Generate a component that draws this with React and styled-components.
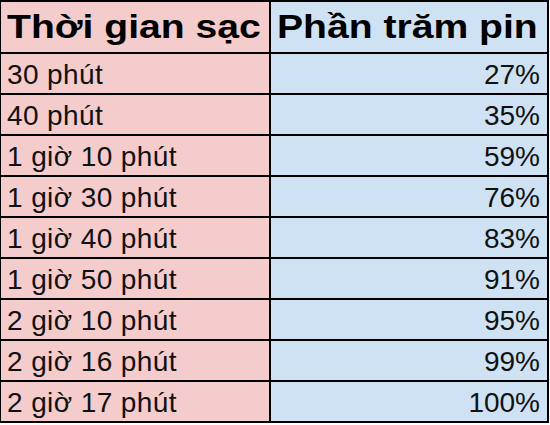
import styled, { createGlobalStyle } from "styled-components";

const GlobalStyle = createGlobalStyle`
  html, body {
    margin: 0;
    padding: 0;
    background: #fff;
  }
  body {
    font-family: "Liberation Sans", Arial, sans-serif;
    color: #000;
  }
`;

const Sheet = styled.div`
  display: grid;
  grid-template-columns: 270px 278px;
  grid-template-rows: 52px repeat(9, 41px);
  width: 548px;
  border-top: 2px solid #000;
  border-left: 1px solid #000;
`;

const Cell = styled.div`
  display: flex;
  align-items: ${(p) => (p.$head ? "flex-end" : "center")};
  justify-content: ${(p) => (p.$right ? "flex-end" : "flex-start")};
  background: ${(p) => (p.$blue ? "#cfe2f3" : "#f4cccc")};
  border-right: 2px solid #000;
  border-bottom: 2px solid #000;
  padding: ${(p) => (p.$head ? "0 4px 6px 6px" : "3px 7px 0 6px")};
  font-size: ${(p) => (p.$head ? "34px" : "28px")};
  font-weight: ${(p) => (p.$head ? 700 : 400)};
  color: ${(p) => (p.$head ? "#000" : "#111")};
  white-space: nowrap;
  overflow: hidden;
`;

const HeadText = styled.span`
  display: inline-block;
  transform: scaleX(1.15);
  transform-origin: left center;
`;

const BodyText = styled.span`
  letter-spacing: ${(p) => (p.$wide ? "0.4px" : "0")};
`;

const rows = [
  ["30 phút", "27%"],
  ["40 phút", "35%"],
  ["1 giờ 10 phút", "59%"],
  ["1 giờ 30 phút", "76%"],
  ["1 giờ 40 phút", "83%"],
  ["1 giờ 50 phút", "91%"],
  ["2 giờ 10 phút", "95%"],
  ["2 giờ 16 phút", "99%"],
  ["2 giờ 17 phút", "100%"],
];

export default function App() {
  return (
    <>
      <GlobalStyle />
      <Sheet>
        <Cell $head>
          <HeadText>Thời gian sạc</HeadText>
        </Cell>
        <Cell $head $blue>
          <HeadText>Phần trăm pin</HeadText>
        </Cell>
        {rows.map(([time, pct]) => (
          <>
            <Cell key={time}>
              <BodyText $wide>{time}</BodyText>
            </Cell>
            <Cell key={time + "p"} $blue $right>
              <BodyText>{pct}</BodyText>
            </Cell>
          </>
        ))}
      </Sheet>
    </>
  );
}
